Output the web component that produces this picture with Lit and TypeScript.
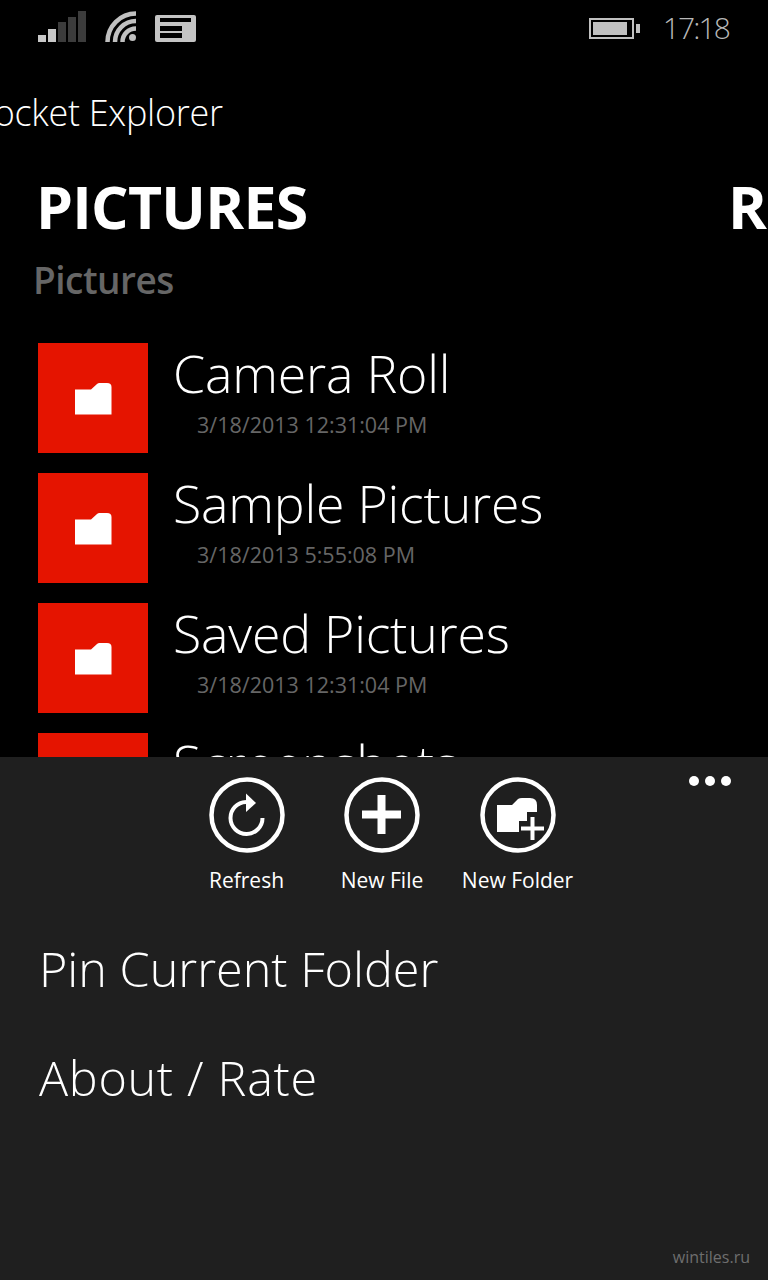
import { LitElement, html, css, svg } from "lit";
import { customElement } from "lit/decorators.js";

const folders = [
  { name: "Camera Roll", date: "3/18/2013 12:31:04 PM" },
  { name: "Sample Pictures", date: "3/18/2013 5:55:08 PM" },
  { name: "Saved Pictures", date: "3/18/2013 12:31:04 PM" },
  { name: "Screenshots", date: "3/18/2013 12:31:04 PM" },
];

const folderIcon = html`<svg class="folder" width="37" height="32" viewBox="0 0 37 32"><path d="M0 6.500H16L22 1Q23 0 24.500 0H32Q36.500 0 36.500 4V31.500H0Z" fill="#fff"/></svg>`;

const ring = svg`<circle cx="38" cy="38" r="35.500" fill="none" stroke="#fff" stroke-width="4.500"/>`;

@customElement("app-root")
export class AppRoot extends LitElement {
  static styles = css`
    :host { display: block; width: 768px; height: 1280px; overflow: hidden; background: #000; color: #fff; font-family: "Open Sans", "Noto Sans", sans-serif; }
    .content { height: 757px; overflow: hidden; }
    .status { height: 55px; display: flex; align-items: flex-start; padding: 11px 39px 0 38px; box-sizing: border-box; color: #c0c0c0; }
    .status svg { display: block; flex: none; }
    .wifi { margin-left: 19px; }
    .msg { margin-left: 18px; }
    .batt { margin-left: auto; margin-top: 7px; }
    .time { margin-left: 22px; font-size: 30px; font-weight: 300; line-height: 34px; letter-spacing: -1.900px; color: #b8b8b8; }
    .apptitle { margin: 36px 0 0 -27px; font-size: 36px; font-weight: 300; line-height: 44px; white-space: nowrap; letter-spacing: -0.3px; }
    .pivot { display: flex; justify-content: space-between; margin-top: 35px; padding-left: 36px; font-size: 59px; font-weight: 700; line-height: 72px; letter-spacing: -0.750px; }
    .pivot span:last-child { width: 40px; overflow: hidden; }
    .crumb { margin: 14px 0 0 33px; font-size: 37px; font-weight: 600; line-height: 48px; color: #666; letter-spacing: -0.5px; }
    .list { display: flex; flex-direction: column; gap: 20px; margin: 39px 0 0 38px; }
    .row { display: flex; gap: 25px; height: 110px; }
    .tile { width: 110px; height: 110px; flex: none; background: #e51400; display: flex; align-items: center; justify-content: center; }
    .folder { display: block; margin-top: 1px; }
    .name { font-size: 51.800px; font-weight: 300; line-height: 60px; white-space: nowrap; letter-spacing: -0.2px; }
    .date { font-size: 21.500px; font-weight: 400; line-height: 30px; margin: 7px 0 0 24px; color: #666; white-space: nowrap; }
    .bar { height: 523px; background: #1f1f1f; position: relative; display: flex; flex-direction: column; }
    .dots { position: absolute; top: 19px; right: 37px; display: flex; gap: 6px; }
    .dots i { display: block; width: 10px; height: 10px; background: #fff; border-radius: 50%; }
    .btns { display: flex; justify-content: center; padding: 20px 4px 0 0; }
    .btn { width: 135.500px; display: flex; flex-direction: column; align-items: center; }
    .btn svg { display: block; }
    .btn span { font-size: 21px; line-height: 28px; margin-top: 13px; white-space: nowrap; }
    .menu { margin: 39px 0 0 39px; display: flex; flex-direction: column; gap: 39px; }
    .menu div { font-size: 48.500px; font-weight: 300; line-height: 70px; white-space: nowrap; }
    .menu .about { letter-spacing: 0.7px; }
    .mark { margin-top: auto; align-self: flex-end; padding: 0 18px 11px 0; font-size: 16px; line-height: 24px; color: #6e6e6e; }
  `;

  render() {
    return html`
      <div class="content">
        <div class="status">
          <svg width="48" height="32" viewBox="0 0 48 32"><rect x="0" y="24" width="8" height="7" fill="#c8c8c8"/><rect x="10" y="18" width="8" height="13" fill="#c8c8c8"/><rect x="20" y="11" width="8" height="20" fill="#3c3c3c"/><rect x="30" y="6" width="8" height="25" fill="#3c3c3c"/><rect x="40" y="0" width="8" height="31" fill="#3c3c3c"/></svg>
          <svg class="wifi" width="32" height="32" viewBox="0 0 32 32" fill="none" stroke="#c0c0c0" stroke-width="4.500"><path d="M2.500 31A28.500 28.500 0 0 1 31 2.500"/><path d="M10 31A21 21 0 0 1 31 10"/><path d="M17.500 31A13.500 13.500 0 0 1 31 17.500"/><circle cx="27.500" cy="26.500" r="3.500" fill="#c0c0c0" stroke="none"/></svg>
          <svg class="msg" width="41" height="31" viewBox="0 0 41 31"><rect y="4" width="41" height="27" rx="2" fill="#c4c4c4"/><rect x="5" y="7" width="31" height="4" fill="#000"/><rect x="5" y="15" width="22" height="5" fill="#000"/><rect x="5" y="22" width="22" height="5" fill="#000"/></svg>
          <svg class="batt" width="52" height="22" viewBox="0 0 52 22"><rect x="1" y="1" width="43" height="19" fill="none" stroke="#c0c0c0" stroke-width="2"/><rect x="4" y="4" width="34" height="13" fill="#c0c0c0"/><rect x="47" y="6" width="4" height="9" fill="#c0c0c0"/></svg>
          <div class="time">17:18</div>
        </div>
        <div class="apptitle">Pocket Explorer</div>
        <div class="pivot"><span>PICTURES</span><span>R</span></div>
        <div class="crumb">Pictures</div>
        <div class="list">
          ${folders.map((f) => html`<div class="row"><div class="tile">${folderIcon}</div><div><div class="name">${f.name}</div><div class="date">${f.date}</div></div></div>`)}
        </div>
      </div>
      <div class="bar">
        <div class="dots"><i></i><i></i><i></i></div>
        <div class="btns">
          <div class="btn">
            <svg width="76" height="76" viewBox="0 0 76 76">${ring}<path d="M53.500 41A16 16 0 1 1 37 25" fill="none" stroke="#fff" stroke-width="4"/><path d="M37 16.500L47 26L37 35Z" fill="#fff"/></svg>
            <span>Refresh</span>
          </div>
          <div class="btn">
            <svg width="76" height="76" viewBox="0 0 76 76">${ring}<path d="M37.500 18V57M18 37.500H57" stroke="#fff" stroke-width="8" fill="none"/></svg>
            <span>New File</span>
          </div>
          <div class="btn">
            <svg width="76" height="76" viewBox="0 0 76 76">${ring}<path d="M17 28H32L38 22Q39.500 21 42 21H50Q57 21 57 28V35H47V44H39V55H17Z" fill="#fff"/><path d="M52.500 40V63M41 51.500H64" stroke="#fff" stroke-width="4" fill="none"/></svg>
            <span>New Folder</span>
          </div>
        </div>
        <div class="menu"><div>Pin Current Folder</div><div class="about">About / Rate</div></div>
        <div class="mark">wintiles.ru</div>
      </div>
    `;
  }
}
